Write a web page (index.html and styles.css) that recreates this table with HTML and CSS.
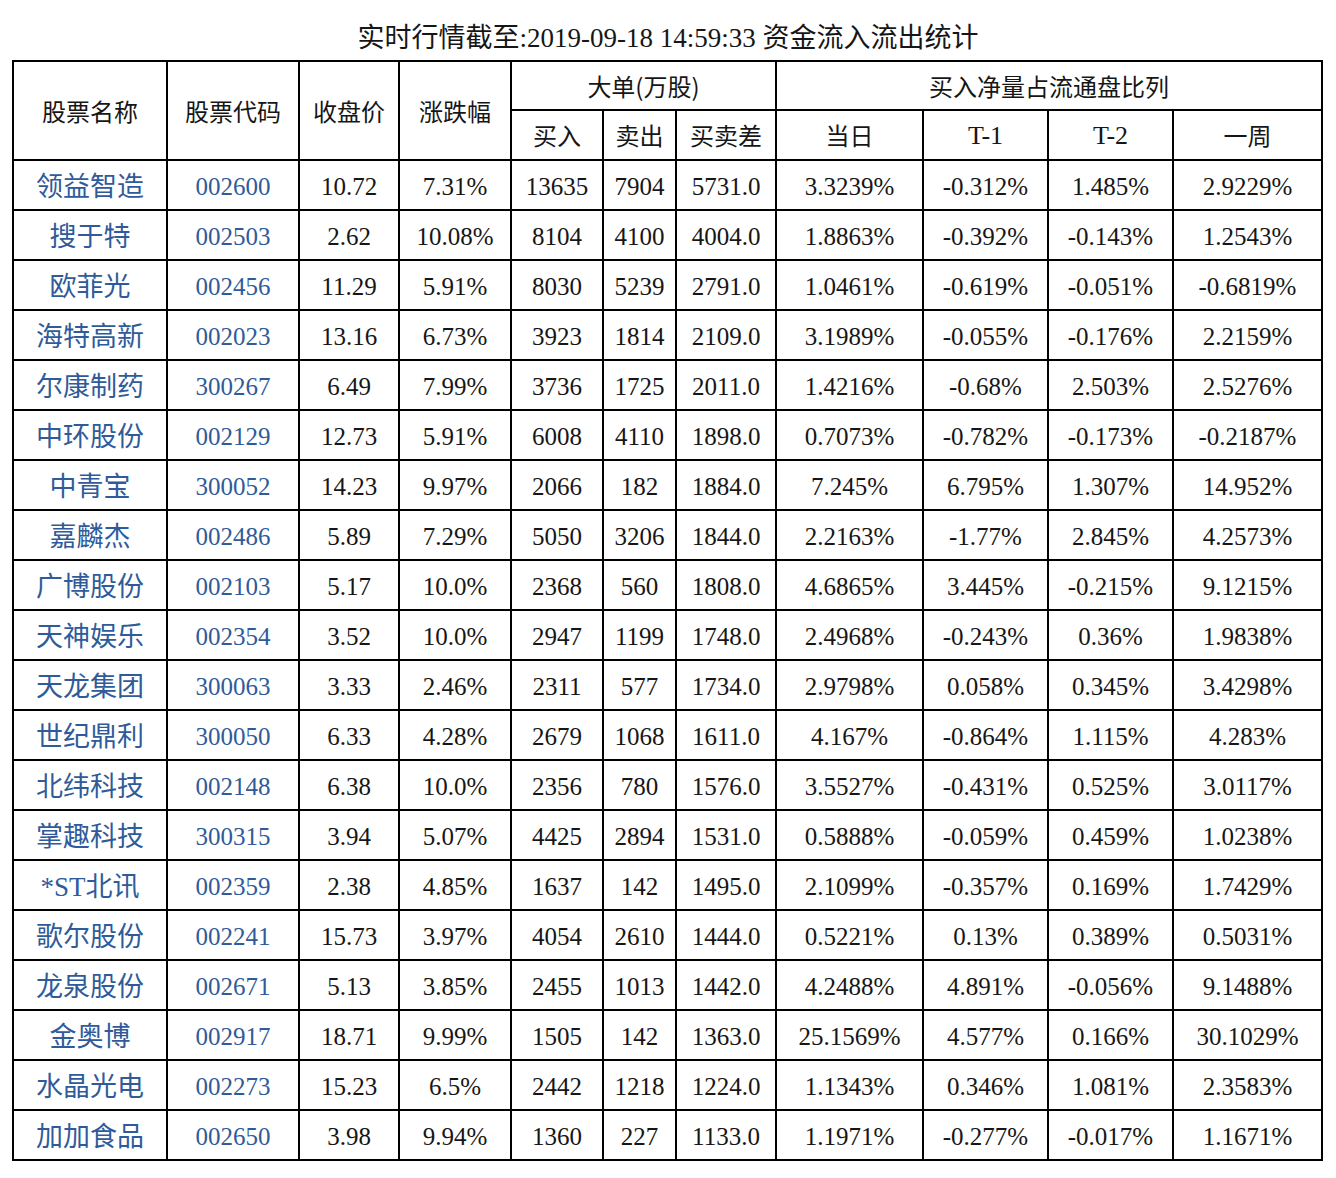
FILE: index.html
```html
<!DOCTYPE html>
<html lang="zh-CN">
<head>
<meta charset="utf-8">
<title>资金流入流出统计</title>
<link rel="stylesheet" href="styles.css">
</head>
<body>
<div class="title">实时行情截至:2019-09-18 14:59:33 资金流入流出统计</div>
<table class="grid">
<colgroup>
<col class="c1"><col class="c2"><col class="c3"><col class="c4"><col class="c5"><col class="c6"><col class="c7"><col class="c8"><col class="c9"><col class="c10"><col class="c11">
</colgroup>
<thead>
<tr class="h1">
<th rowspan="2">股票名称</th><th rowspan="2">股票代码</th><th rowspan="2">收盘价</th><th rowspan="2">涨跌幅</th>
<th colspan="3">大单(万股)</th><th colspan="4">买入净量占流通盘比列</th>
</tr>
<tr class="h2">
<th>买入</th><th>卖出</th><th>买卖差</th><th>当日</th><th class="lat">T-1</th><th class="lat">T-2</th><th>一周</th>
</tr>
</thead>
<tbody>
<tr><td class="name">领益智造</td><td class="code">002600</td><td>10.72</td><td>7.31%</td><td>13635</td><td>7904</td><td>5731.0</td><td>3.3239%</td><td>-0.312%</td><td>1.485%</td><td>2.9229%</td></tr>
<tr><td class="name">搜于特</td><td class="code">002503</td><td>2.62</td><td>10.08%</td><td>8104</td><td>4100</td><td>4004.0</td><td>1.8863%</td><td>-0.392%</td><td>-0.143%</td><td>1.2543%</td></tr>
<tr><td class="name">欧菲光</td><td class="code">002456</td><td>11.29</td><td>5.91%</td><td>8030</td><td>5239</td><td>2791.0</td><td>1.0461%</td><td>-0.619%</td><td>-0.051%</td><td>-0.6819%</td></tr>
<tr><td class="name">海特高新</td><td class="code">002023</td><td>13.16</td><td>6.73%</td><td>3923</td><td>1814</td><td>2109.0</td><td>3.1989%</td><td>-0.055%</td><td>-0.176%</td><td>2.2159%</td></tr>
<tr><td class="name">尔康制药</td><td class="code">300267</td><td>6.49</td><td>7.99%</td><td>3736</td><td>1725</td><td>2011.0</td><td>1.4216%</td><td>-0.68%</td><td>2.503%</td><td>2.5276%</td></tr>
<tr><td class="name">中环股份</td><td class="code">002129</td><td>12.73</td><td>5.91%</td><td>6008</td><td>4110</td><td>1898.0</td><td>0.7073%</td><td>-0.782%</td><td>-0.173%</td><td>-0.2187%</td></tr>
<tr><td class="name">中青宝</td><td class="code">300052</td><td>14.23</td><td>9.97%</td><td>2066</td><td>182</td><td>1884.0</td><td>7.245%</td><td>6.795%</td><td>1.307%</td><td>14.952%</td></tr>
<tr><td class="name">嘉麟杰</td><td class="code">002486</td><td>5.89</td><td>7.29%</td><td>5050</td><td>3206</td><td>1844.0</td><td>2.2163%</td><td>-1.77%</td><td>2.845%</td><td>4.2573%</td></tr>
<tr><td class="name">广博股份</td><td class="code">002103</td><td>5.17</td><td>10.0%</td><td>2368</td><td>560</td><td>1808.0</td><td>4.6865%</td><td>3.445%</td><td>-0.215%</td><td>9.1215%</td></tr>
<tr><td class="name">天神娱乐</td><td class="code">002354</td><td>3.52</td><td>10.0%</td><td>2947</td><td>1199</td><td>1748.0</td><td>2.4968%</td><td>-0.243%</td><td>0.36%</td><td>1.9838%</td></tr>
<tr><td class="name">天龙集团</td><td class="code">300063</td><td>3.33</td><td>2.46%</td><td>2311</td><td>577</td><td>1734.0</td><td>2.9798%</td><td>0.058%</td><td>0.345%</td><td>3.4298%</td></tr>
<tr><td class="name">世纪鼎利</td><td class="code">300050</td><td>6.33</td><td>4.28%</td><td>2679</td><td>1068</td><td>1611.0</td><td>4.167%</td><td>-0.864%</td><td>1.115%</td><td>4.283%</td></tr>
<tr><td class="name">北纬科技</td><td class="code">002148</td><td>6.38</td><td>10.0%</td><td>2356</td><td>780</td><td>1576.0</td><td>3.5527%</td><td>-0.431%</td><td>0.525%</td><td>3.0117%</td></tr>
<tr><td class="name">掌趣科技</td><td class="code">300315</td><td>3.94</td><td>5.07%</td><td>4425</td><td>2894</td><td>1531.0</td><td>0.5888%</td><td>-0.059%</td><td>0.459%</td><td>1.0238%</td></tr>
<tr><td class="name">*ST北讯</td><td class="code">002359</td><td>2.38</td><td>4.85%</td><td>1637</td><td>142</td><td>1495.0</td><td>2.1099%</td><td>-0.357%</td><td>0.169%</td><td>1.7429%</td></tr>
<tr><td class="name">歌尔股份</td><td class="code">002241</td><td>15.73</td><td>3.97%</td><td>4054</td><td>2610</td><td>1444.0</td><td>0.5221%</td><td>0.13%</td><td>0.389%</td><td>0.5031%</td></tr>
<tr><td class="name">龙泉股份</td><td class="code">002671</td><td>5.13</td><td>3.85%</td><td>2455</td><td>1013</td><td>1442.0</td><td>4.2488%</td><td>4.891%</td><td>-0.056%</td><td>9.1488%</td></tr>
<tr><td class="name">金奥博</td><td class="code">002917</td><td>18.71</td><td>9.99%</td><td>1505</td><td>142</td><td>1363.0</td><td>25.1569%</td><td>4.577%</td><td>0.166%</td><td>30.1029%</td></tr>
<tr><td class="name">水晶光电</td><td class="code">002273</td><td>15.23</td><td>6.5%</td><td>2442</td><td>1218</td><td>1224.0</td><td>1.1343%</td><td>0.346%</td><td>1.081%</td><td>2.3583%</td></tr>
<tr><td class="name">加加食品</td><td class="code">002650</td><td>3.98</td><td>9.94%</td><td>1360</td><td>227</td><td>1133.0</td><td>1.1971%</td><td>-0.277%</td><td>-0.017%</td><td>1.1671%</td></tr>
</tbody>
</table>
</body>
</html>
```
FILE: styles.css
```css
html, body {
  margin: 0;
  padding: 0;
  background: #ffffff;
}
body {
  font-family: "Liberation Serif", "Noto Sans CJK SC", serif;
  color: #161616;
}
.title {
  height: 60px;
  box-sizing: border-box;
  padding-top: 22px;
  text-align: center;
  font-size: 27px;
  line-height: 32px;
}
.grid {
  margin-left: 12px;
  border-collapse: collapse;
  table-layout: fixed;
  width: 1309px;
  border: 2px solid #000;
}
.c1 { width: 154px; }
.c2 { width: 132px; }
.c3 { width: 100px; }
.c4 { width: 112px; }
.c5 { width: 92px; }
.c6 { width: 73px; }
.c7 { width: 100px; }
.c8 { width: 147px; }
.c9 { width: 125px; }
.c10 { width: 125px; }
.c11 { width: 149px; }
.grid th, .grid td {
  border: 2px solid #000;
  padding: 0;
  text-align: center;
  vertical-align: middle;
  white-space: nowrap;
  overflow: hidden;
}
.grid th {
  font-weight: normal;
  font-size: 24px;
  line-height: 30px;
  font-family: "Noto Sans CJK SC", "Liberation Serif", sans-serif;
}
.grid th.lat {
  font-family: "Liberation Serif", serif;
  font-size: 26px;
  padding-top: 2px;
}
.h1 { height: 49px; }
.h2 { height: 50px; }
.grid tbody tr { height: 50px; }
.grid td {
  font-size: 25px;
  line-height: 30px;
  padding-top: 3px;
}
.grid td.name {
  color: #2f5b9a;
  font-size: 27px;
  font-family: "Liberation Serif", "Noto Sans CJK SC", serif;
}
.grid td.code {
  color: #2f5b9a;
}
```
